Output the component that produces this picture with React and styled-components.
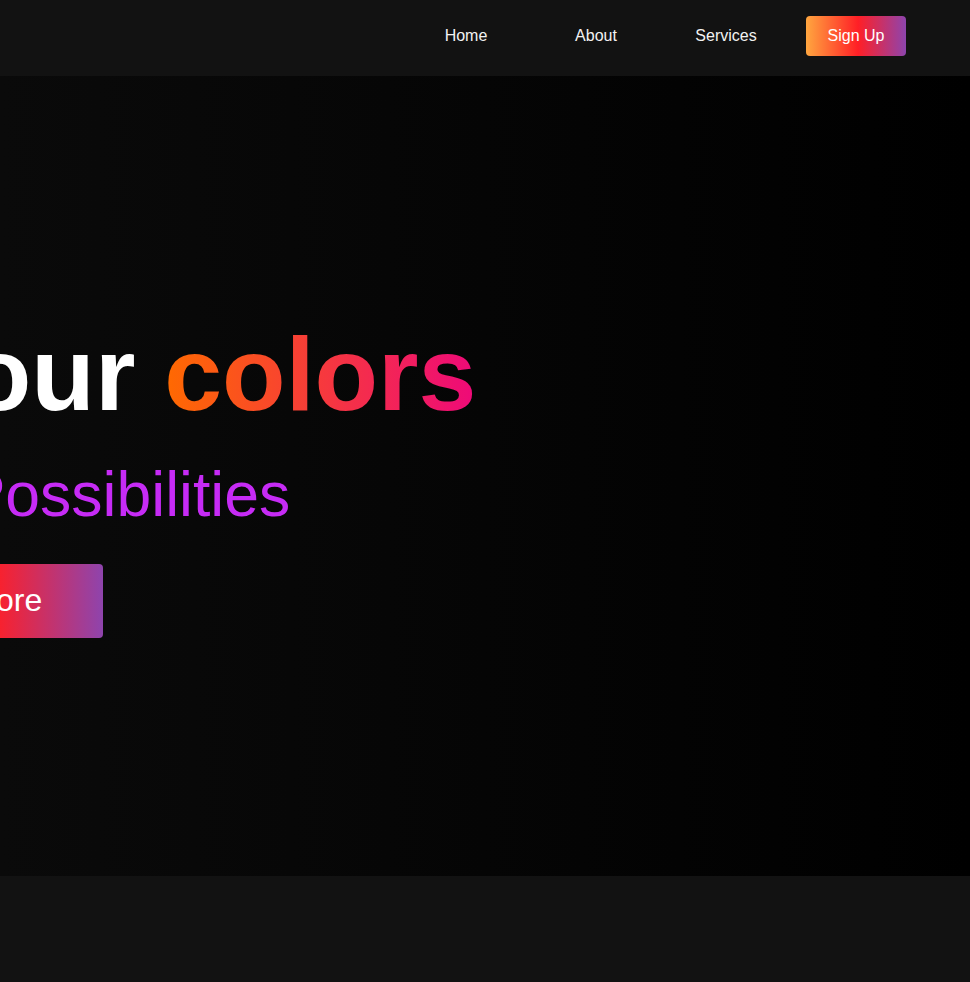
import styled, { createGlobalStyle } from 'styled-components';

const GlobalStyle = createGlobalStyle`
  * {
    box-sizing: border-box;
  }

  body {
    margin: 0;
    background: #121212;
    font-family: 'Liberation Sans', Arial, sans-serif;
    color: #f2f2f2;
  }
`;

const brandGradient = 'linear-gradient(90deg, #ffa63f 0%, #ff1f26 52%, #8e44ad 100%)';

const Header = styled.header`
  display: flex;
  justify-content: flex-end;
  align-items: flex-start;
  height: 76px;
  padding: 16px 64px 0;
  background: #121212;
`;

const NavList = styled.nav`
  display: flex;
  gap: 30px;
`;

const NavLink = styled.a`
  display: block;
  width: 100px;
  padding: 11px 0;
  text-align: center;
  font-size: 16px;
  text-decoration: none;
  border-radius: 4px;
  background: ${({ $primary }) => ($primary ? brandGradient : 'transparent')};
  color: ${({ $primary }) => ($primary ? '#ffffff' : '#f2f2f2')};
`;

const Hero = styled.section`
  display: flex;
  align-items: center;
  height: 800px;
  overflow: hidden;
  background: linear-gradient(90deg, #0a0a0a 0%, #050505 50%, #000000 100%);
`;

// the hero copy is centred on an axis just left of the viewport edge
const HeroContent = styled.div`
  display: flex;
  flex-direction: column;
  align-items: center;
  width: 0;
  margin-left: -12px;
  white-space: nowrap;
`;

const Title = styled.h1`
  margin: 0 0 24px;
  font-size: 104px;
  font-weight: 700;
  color: #ffffff;
`;

const Highlight = styled.span`
  background: linear-gradient(90deg, #ff6a00, #ee0979);
  -webkit-background-clip: text;
  background-clip: text;
  color: transparent;
`;

const Subtitle = styled.p`
  margin: 0 0 34px;
  font-size: 62.5px;
  font-weight: 400;
  color: #c62bf5;
`;

const CtaButton = styled.a`
  display: block;
  padding: 18.5px 61px;
  font-size: 32px;
  color: #ffffff;
  text-decoration: none;
  border-radius: 4px;
  background: ${brandGradient};
`;

export default function App() {
  return (
    <>
      <GlobalStyle />
      <Header>
        <NavList>
          <NavLink href="#home">Home</NavLink>
          <NavLink href="#about">About</NavLink>
          <NavLink href="#services">Services</NavLink>
          <NavLink href="#signup" $primary>
            Sign Up
          </NavLink>
        </NavList>
      </Header>
      <Hero>
        <HeroContent>
          <Title>
            Explore your <Highlight>colors</Highlight>
          </Title>
          <Subtitle>Unlimited Possibilities</Subtitle>
          <CtaButton href="#explore">Explore</CtaButton>
        </HeroContent>
      </Hero>
    </>
  );
}
